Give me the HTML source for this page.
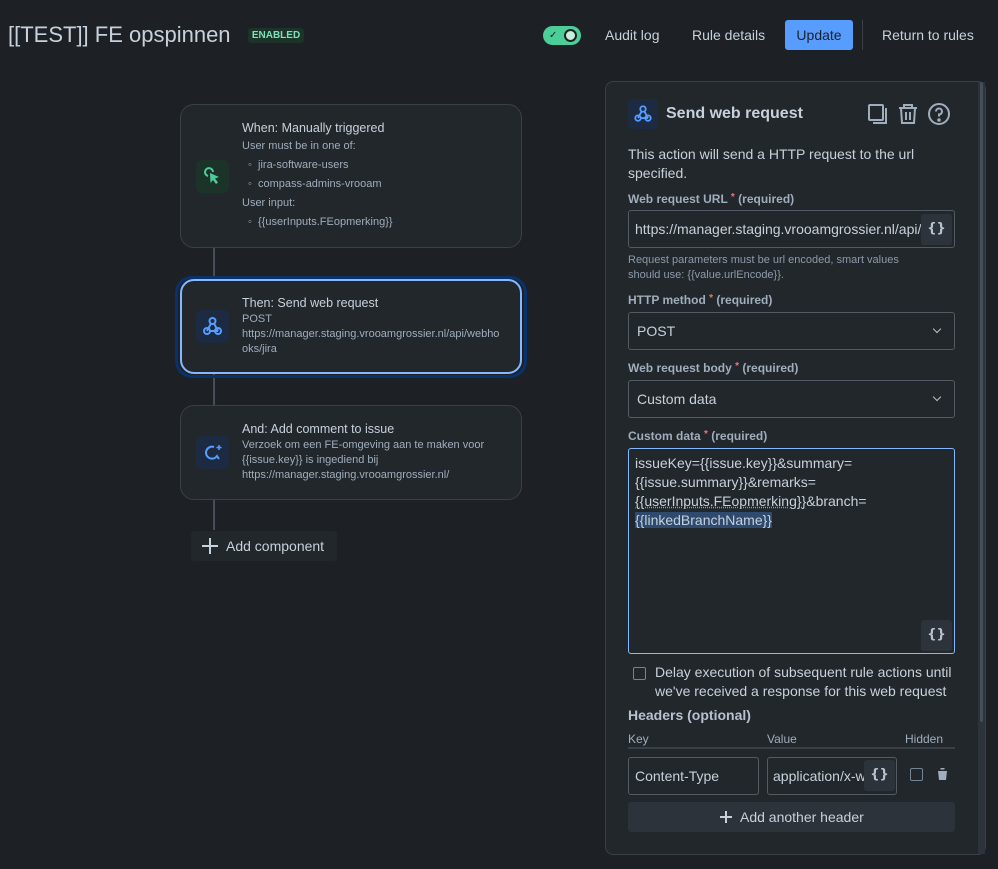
<!DOCTYPE html>
<html><head><style>
*{box-sizing:border-box;margin:0;padding:0}
body{width:998px;height:869px;background:#1d2125;font-family:"Liberation Sans",sans-serif;color:#b6c2cf;position:relative;overflow:hidden}
.a{position:absolute}
.card{position:absolute;left:180px;width:342px;background:#22272b;border:1px solid #3b4047;border-radius:14px}
.ic{position:absolute;left:15px;width:33px;height:33px;border-radius:6px}
.ct{position:absolute;left:61px;font-size:12.5px;color:#c7d1db}
.sm{font-size:11px;color:#9fadbc;line-height:19px}
.lbl{position:absolute;left:628px;font-size:12px;font-weight:bold;color:#9fadbc}
.lbl b{color:#f87168;font-size:10px;vertical-align:top}
.inp{position:absolute;left:628px;width:327px;height:38px;border:1px solid #525a63;border-radius:3px;background:#22272b;font-size:14px;color:#c7d1db;padding-left:8px;line-height:36px}
.brace{position:absolute;width:31px;height:31px;background:#2c333a;border-radius:3px;font-size:13px;font-weight:bold;color:#b6c2cf;text-align:center;line-height:30px;font-family:"DejaVu Sans",sans-serif}
.chev{position:absolute;right:14px;top:13px;width:6px;height:6px;border-right:1.5px solid #b6c2cf;border-bottom:1.5px solid #b6c2cf;transform:rotate(45deg)}
</style></head><body>
<div class="a" style="left:8px;top:22px;font-size:22px;color:#c7d1db">[[TEST]] FE opspinnen</div>
<div class="a" style="left:248px;top:28px;width:56px;height:15px;background:#1c3329;border-radius:3px;color:#7ee2b8;font-size:10px;font-weight:bold;text-align:center;line-height:15px">ENABLED</div>
<div class="a" style="left:543px;top:26px;width:38px;height:19px;background:#4bce97;border-radius:10px"><div class="a" style="left:21px;top:3px;width:13px;height:13px;border-radius:50%;border:2px solid #1d2125;background:#c7f0dc"></div><div class="a" style="left:6px;top:4px;font-size:10px;color:#1d2125">✓</div></div>
<div class="a" style="left:605px;top:27px;font-size:14px;color:#c7d1db">Audit log</div>
<div class="a" style="left:692px;top:27px;font-size:14px;color:#c7d1db">Rule details</div>
<div class="a" style="left:785px;top:20px;width:68px;height:30px;background:#579dff;border-radius:3px;color:#1d2125;font-size:14px;text-align:center;line-height:30px">Update</div>
<div class="a" style="left:862px;top:20px;width:1px;height:30px;background:#3b4047"></div>
<div class="a" style="left:882px;top:27px;font-size:14px;color:#c7d1db">Return to rules</div>

<div class="a" style="left:213px;top:247px;width:2px;height:283px;background:#454e59"></div>

<div class="card" style="top:104px;height:144px">
<div class="ic" style="top:55px;background:#1c3329"><svg width="33" height="33" viewBox="0 0 33 33"><path d="M12 16a4 4 0 1 1 5-4" fill="none" stroke="#4bce97" stroke-width="2"/><path d="M14 13l9 4-4 1.5 3 4-2 1.5-3-4-2.5 3z" fill="#4bce97"/></svg></div>
<div class="ct" style="top:16px">When: Manually triggered</div>
<div class="ct sm" style="top:32px">User must be in one of:<br><span style="padding-left:6px">◦&nbsp; jira-software-users</span><br><span style="padding-left:6px">◦&nbsp; compass-admins-vrooam</span><br>User input:<br><span style="padding-left:6px">◦&nbsp; {{userInputs.FEopmerking}}</span></div>
</div>

<div class="a" style="left:175px;top:276px;width:352px;height:102px;border:3px solid #09326c;border-radius:17px"></div>
<div class="card" style="top:279px;height:95px;border:2px solid #85b8ff">
<div class="ic" style="top:29px;left:14px;background:#1c2b41"><svg width="33" height="33" viewBox="0 0 33 33" fill="none" stroke="#579dff" stroke-width="2"><circle cx="16.5" cy="11" r="3"/><circle cx="11" cy="21" r="3"/><circle cx="22" cy="21" r="3"/><path d="M15 13.5l-4 7.5M14 21h8M18 13.5l4 7.5"/></svg></div>
<div class="ct" style="top:15px;left:60px">Then: Send web request</div>
<div class="ct sm" style="top:31px;left:60px;line-height:15px;width:270px">POST<br>https://manager.staging.vrooamgrossier.nl/api/webho oks/jira</div>
</div>

<div class="card" style="top:405px;height:95px">
<div class="ic" style="top:30px;background:#1c2b41"><svg width="33" height="33" viewBox="0 0 33 33" fill="none" stroke="#579dff" stroke-width="2"><path d="M18 11a6 6 0 1 0 3 9l2 3"/><path d="M23 9v5M20.5 11.5h5" stroke-width="1.5"/></svg></div>
<div class="ct" style="top:16px">And: Add comment to issue</div>
<div class="ct sm" style="top:32px;line-height:15px;width:270px">Verzoek om een FE-omgeving aan te maken voor {{issue.key}} is ingediend bij https://manager.staging.vrooamgrossier.nl/</div>
</div>

<div class="a" style="left:191px;top:531px;width:146px;height:30px;background:#22272b;border-radius:3px;font-size:14px;color:#c7d1db;line-height:30px;padding-left:35px">Add component<div class="a" style="left:11px;top:7px;width:16px;height:16px"><div class="a" style="left:7px;top:0;width:2px;height:16px;background:#c7d1db"></div><div class="a" style="left:0;top:7px;width:16px;height:2px;background:#c7d1db"></div></div></div>

<div class="a" style="left:605px;top:81px;width:381px;height:774px;background:#22272b;border:1px solid #3b4047;border-radius:8px"></div>
<div class="a" style="left:978px;top:82px;width:7px;height:772px;background:#2c333a"></div>
<div class="a" style="left:980px;top:82px;width:3px;height:640px;background:#454e59;border-radius:2px"></div>

<div class="a" style="left:628px;top:99px;width:30px;height:30px;border-radius:5px;background:#1c2b41"><svg width="30" height="30" viewBox="0 0 33 33" fill="none" stroke="#579dff" stroke-width="2"><circle cx="16.5" cy="11" r="3"/><circle cx="11" cy="21" r="3"/><circle cx="22" cy="21" r="3"/><path d="M15 13.5l-4 7.5M14 21h8M18 13.5l4 7.5"/></svg></div>
<div class="a" style="left:666px;top:105px;font-size:16px;font-weight:bold;color:#c7d1db">Send web request</div>
<svg class="a" style="left:866px;top:102px" width="90" height="24" viewBox="0 0 90 24" fill="none" stroke="#9fadbc" stroke-width="2"><rect x="3" y="3" width="14" height="15" rx="1"/><path d="M20 6v15H7"/><path d="M33 6h18M38 6V3h8v3M35 6l1 15h12l1-15M40 10v8M44 10v8"/><circle cx="73" cy="12" r="10"/><path d="M70 9.5a3 3 0 1 1 3 3v2"/><circle cx="73" cy="18" r=".8" fill="#9fadbc"/></svg>
<div class="a" style="left:628px;top:145px;width:310px;font-size:14px;line-height:19px;color:#c7d1db">This action will send a HTTP request to the url specified.</div>

<div class="lbl" style="top:192px">Web request URL <b>*</b> (required)</div>
<div class="inp" style="top:210px;overflow:hidden;white-space:nowrap;padding-right:36px;padding-left:6px">https://manager.staging.vrooamgrossier.nl/api/</div>
<div class="brace" style="left:921px;top:214px">{}</div>
<div class="a" style="left:628px;top:253px;font-size:11px;line-height:15px;color:#8c9bab;width:305px">Request parameters must be url encoded, smart values should use: {{value.urlEncode}}.</div>

<div class="lbl" style="top:293px">HTTP method <b>*</b> (required)</div>
<div class="inp" style="top:312px">POST<div class="chev"></div></div>
<div class="lbl" style="top:361px">Web request body <b>*</b> (required)</div>
<div class="inp" style="top:380px">Custom data<div class="chev"></div></div>
<div class="lbl" style="top:429px">Custom data <b>*</b> (required)</div>
<div class="inp" style="top:448px;height:206px;border:1px solid #85b8ff;line-height:19px;padding:5px 6px">issueKey={{issue.key}}&amp;summary=<br>{{issue.summary}}&amp;remarks=<br><span style="text-decoration:underline dotted #f87168">{{userInputs.FEopmerking}}</span>&amp;branch=<br><span style="background:#2e4a6e">{{linkedBranchName}}</span></div>
<div class="brace" style="left:921px;top:620px">{}</div>

<div class="a" style="left:633px;top:667px;width:13px;height:13px;border:1.5px solid #738496;border-radius:2px"></div>
<div class="a" style="left:655px;top:663px;font-size:14px;line-height:19px;color:#c7d1db">Delay execution of subsequent rule actions until<br>we've received a response for this web request</div>
<div class="a" style="left:628px;top:707px;font-size:14px;font-weight:bold;color:#b6c2cf">Headers (optional)</div>
<div class="a" style="left:628px;top:732px;font-size:12px;color:#9fadbc">Key</div>
<div class="a" style="left:767px;top:732px;font-size:12px;color:#9fadbc">Value</div>
<div class="a" style="left:905px;top:732px;font-size:12px;color:#9fadbc">Hidden</div>
<div class="a" style="left:628px;top:747px;width:327px;height:2px;background:#3b4047"></div>
<div class="inp" style="top:757px;width:131px;height:38px;padding-left:6px">Content-Type</div>
<div class="inp" style="left:767px;top:757px;width:130px;height:38px;padding-left:5px;overflow:hidden;white-space:nowrap">application/x-w</div>
<div class="brace" style="left:864px;top:760px">{}</div>
<div class="a" style="left:910px;top:768px;width:13px;height:13px;border:1.5px solid #738496;border-radius:2px"></div>
<svg class="a" style="left:937px;top:768px" width="11" height="12" viewBox="0 0 11 12"><path d="M0 1.5h11M3.5 1.5V0h4v1.5M1 3h9l-1 9H2z" fill="#9fadbc"/></svg>
<div class="a" style="left:628px;top:802px;width:327px;height:30px;background:#2c333a;border-radius:3px;font-size:14px;color:#c7d1db;line-height:30px;padding-left:112px">Add another header<div class="a" style="left:92px;top:9px;width:12px;height:12px"><div class="a" style="left:5px;top:0;width:2px;height:12px;background:#c7d1db"></div><div class="a" style="left:0;top:5px;width:12px;height:2px;background:#c7d1db"></div></div></div>
</body></html>
